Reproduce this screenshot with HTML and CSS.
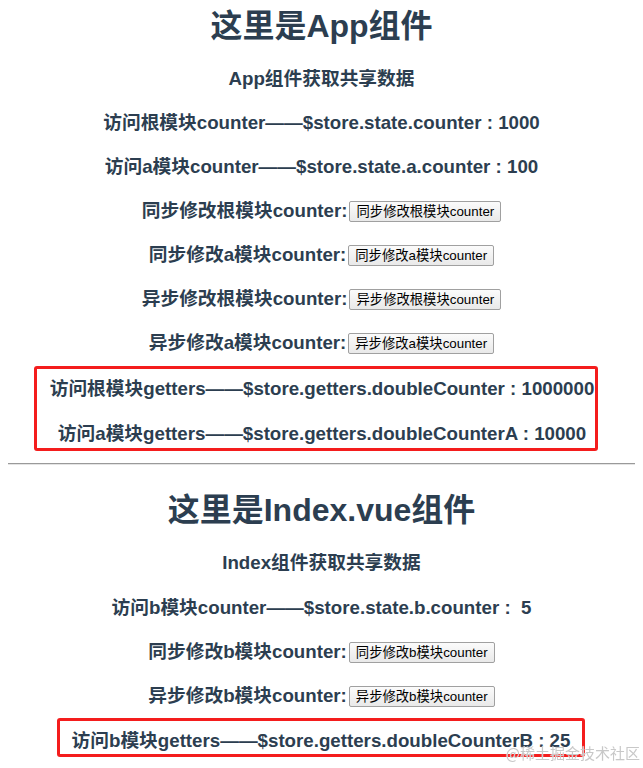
FILE: index.html
```html
<!DOCTYPE html>
<html lang="zh-CN">
<head>
    <meta charset="UTF-8">
    <meta name="viewport" content="width=device-width, initial-scale=1.0">
    <title>Vuex modules</title>
    <link rel="stylesheet" href="styles.css">
</head>
<body>
    <div id="app">
        <!-- App component -->
        <div class="section section-app">
            <h1>这里是App组件</h1>
            <h3 class="subtitle">App组件获取共享数据</h3>
            <h3 class="row">访问根模块counter——$store.state.counter : 1000</h3>
            <h3 class="row">访问a模块counter——$store.state.a.counter : 100</h3>
            <h3 class="row">同步修改根模块counter:<button>同步修改根模块counter</button></h3>
            <h3 class="row">同步修改a模块counter:<button>同步修改a模块counter</button></h3>
            <h3 class="row">异步修改根模块counter:<button>异步修改根模块counter</button></h3>
            <h3 class="row">异步修改a模块counter:<button>异步修改a模块counter</button></h3>
            <div class="mark mark-app">
                <h3 class="row">访问根模块getters——$store.getters.doubleCounter : 1000000</h3>
                <h3 class="row">访问a模块getters——$store.getters.doubleCounterA : 10000</h3>
            </div>
        </div>

        <hr>

        <!-- Index.vue component -->
        <div class="section section-index">
            <h1>这里是Index.vue组件</h1>
            <h3 class="subtitle">Index组件获取共享数据</h3>
            <h3 class="row">访问b模块counter——$store.state.b.counter :&nbsp; 5</h3>
            <h3 class="row">同步修改b模块counter:<button>同步修改b模块counter</button></h3>
            <h3 class="row">异步修改b模块counter:<button>异步修改b模块counter</button></h3>
            <div class="mark mark-index">
                <h3 class="row">访问b模块getters——$store.getters.doubleCounterB : 25</h3>
            </div>
        </div>
    </div>

    <div class="watermark">@稀土掘金技术社区</div>
</body>
</html>
```

FILE: styles.css
```css
html, body {
    height: 100%;
}
body {
    margin: 0 8px;
    background: #fff;
    overflow: hidden;
}
#app {
    font-family: "Liberation Sans", Arial, "Noto Sans CJK SC", sans-serif;
    color: #2c3e50;
    text-align: center;
    display: flex;
    flex-direction: column;
}
.section {
    display: flex;
    flex-direction: column;
    align-items: center;
}
h1 {
    font-size: 32px;
    line-height: 38px;
    font-weight: bold;
    margin: 0;
    white-space: nowrap;
}
h3 {
    margin: 0;
    font-weight: bold;
    white-space: nowrap;
}
.subtitle {
    font-size: 18.72px;
    line-height: 26px;
    margin-top: 21px;
}
.row {
    font-size: 18.72px;
    line-height: 26px;
    margin-top: 18px;
}
.section-app h1 {
    margin-top: 7px;
}
.section-app .subtitle + .row {
    margin-top: 18px;
}
.section-index h1 {
    margin-top: 26px;
}
.section-index .subtitle + .row {
    margin-top: 19px;
}
button {
    font-family: "Liberation Sans", Arial, "Noto Sans CJK SC", sans-serif;
    font-size: 13.33px;
    line-height: 17px;
    font-weight: normal;
    color: #000;
    padding: 1px 6px;
    margin-left: 2px;
    border: 1px solid #a0a0a0;
    border-radius: 2px;
    background: linear-gradient(#fbfbfb, #e9e9e9);
    vertical-align: 1px;
}
.mark {
    align-self: stretch;
    border: 3px solid #f41d1d;
    border-radius: 3px;
    display: flex;
    flex-direction: column;
    align-items: center;
}
.mark .row:first-child {
    margin-top: 0;
}
.mark-app {
    margin: 10px 37px 0 26px;
    padding: 7px 0 1px 12px;
}
.mark-app .row + .row {
    margin-top: 19px;
}
.mark-index {
    margin: 9px 50px 0 49px;
    padding: 7px 0 0 0;
}
hr {
    border: 0;
    border-top: 1px solid #9a9a9a;
    border-bottom: 1px solid #e4e4e4;
    margin: 12px 0 0;
    height: 0;
}
.watermark {
    position: fixed;
    right: 3px;
    bottom: 6px;
    font-family: "Noto Sans CJK SC", sans-serif;
    font-size: 15px;
    line-height: 18px;
    color: #c8c8c8;
    text-shadow: 0 0 1px #fff;
}
```
